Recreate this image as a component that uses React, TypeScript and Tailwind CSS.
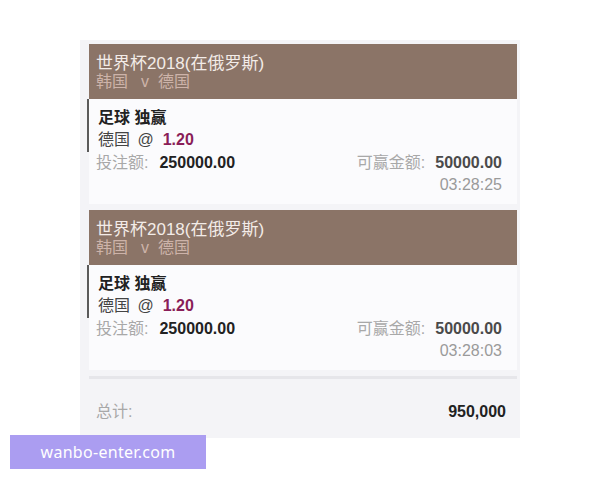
const font = { fontFamily: '"Liberation Sans", "Noto Sans CJK SC", sans-serif' };

type Bet = { time: string };

const bets: Bet[] = [{ time: '03:28:25' }, { time: '03:28:03' }];

const BetCard = ({ time }: Bet) => (
  <div className="ml-[9px] mr-[3px]">
    {/* Match header */}
    <div className="bg-[#8b7467] h-[55px] pl-[7px] pt-[11px] leading-[18px]">
      <div className="text-[17px] text-[#f3ece8]">世界杯2018(在俄罗斯)</div>
      <div className="text-[16px] text-[#cdb3a9]">
        韩国<span className="ml-[13px]">v</span>
        <span className="ml-[9px]">德国</span>
      </div>
    </div>

    {/* Bet details */}
    <div className="bg-[#fbfbfd] pb-[8px]">
      <div className="-ml-[2px] border-l-[2px] border-[#5a5a5a] pl-[9px] pt-[8px] h-[53px] leading-[22px] text-[16px]">
        <div className="font-bold text-[#222]">足球 独赢</div>
        <div className="text-[#444]">
          德国 <span className="ml-[3px]">@</span>
          <span className="ml-[9px] font-bold text-[#8a1e58]">1.20</span>
        </div>
      </div>
      <div className="flex justify-between pl-[7px] pr-[15px] leading-[22px] text-[16px]">
        <div>
          <span className="text-[#a8a8a8]">投注额:</span>
          <span className="ml-[11px] font-bold text-[#222]">250000.00</span>
        </div>
        <div>
          <span className="text-[#a8a8a8]">可赢金额:</span>
          <span className="ml-[10px] font-bold text-[#4a4a4a]">50000.00</span>
        </div>
      </div>
      <div className="text-right pr-[15px] leading-[22px] text-[16px] text-[#9a9a9a]">{time}</div>
    </div>
  </div>
);

export default function App() {
  return (
    <div className="relative w-[600px] h-[480px] bg-white" style={font}>
      <div className="absolute left-[80px] top-[40px] w-[440px] h-[398px] bg-[#f4f4f7] pt-[4px]">
        <div className="flex flex-col gap-[6px]">
          {bets.map((b, i) => (
            <BetCard key={i} {...b} />
          ))}
        </div>
        <div className="mt-[6px] ml-[9px] mr-[3px] h-[3px] bg-[#e6e6ea]" />
        <div className="flex justify-between items-center pl-[16px] pr-[14px] h-[66px] text-[16px]">
          <span className="text-[#a8a8a8]">总计:</span>
          <span className="font-bold text-[#222]">950,000</span>
        </div>
      </div>

      {/* Watermark */}
      <div className="absolute left-[10px] top-[435px] w-[196px] h-[34px] bg-[#ab9df1] flex items-center justify-center text-white text-[16px] tracking-[0.3px]" style={{ fontFamily: '"Noto Sans", sans-serif' }}>
        wanbo-enter.com
      </div>
    </div>
  );
}
